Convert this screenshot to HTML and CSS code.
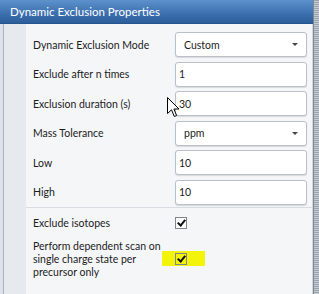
FILE: index.html
```html
<!DOCTYPE html>
<html lang="en">

<head>
    <meta charset="UTF-8">
    <title>Dynamic Exclusion Properties</title>
    <link rel="stylesheet" href="styles.css">
</head>

<body>
    <div class="panel">
        <div class="header">Dynamic Exclusion Properties</div>
        <div class="content">
            <div class="grid">
                <label class="label">Dynamic Exclusion Mode</label>
                <div class="control select"><span>Custom</span><span class="arrow"></span></div>

                <label class="label">Exclude after n times</label>
                <div class="control input">1</div>

                <label class="label">Exclusion duration (s)</label>
                <div class="control input">30</div>

                <label class="label">Mass Tolerance</label>
                <div class="control select"><span>ppm</span><span class="arrow"></span></div>

                <label class="label">Low</label>
                <div class="control input">10</div>

                <label class="label">High</label>
                <div class="control input">10</div>
            </div>

            <div class="divider"></div>

            <div class="checks">
                <div class="check-row">
                    <span class="label">Exclude isotopes</span>
                    <span class="cell"><span class="checkbox"></span></span>
                </div>
                <div class="check-row">
                    <span class="label wrap">Perform dependent scan on single charge state per precursor only</span>
                    <span class="cell"><span class="highlight"><span class="checkbox"></span></span></span>
                </div>
            </div>
        </div>
    </div>
    <div class="edge"></div>

    <svg class="cursor" width="13" height="21" viewBox="0 0 13 21">
        <path d="M0.5 0.5 L0.5 16.5 L4.5 12.8 L7.3 19.5 L9.6 18.5 L6.9 12 L12 12 Z" fill="#fff" stroke="#000" stroke-width="1" />
    </svg>
</body>

</html>
```

FILE: styles.css
```css
body {
    margin: 0;
    width: 319px;
    height: 294px;
    display: flex;
    font-family: Lato, "Open Sans", sans-serif;
    font-size: 10.5px;
    color: #1c1c1c;
    overflow: hidden;
    position: relative;
    background: #8e9aa6;
}

.panel {
    width: 313px;
    display: flex;
    flex-direction: column;
}

.header {
    height: 24px;
    box-sizing: border-box;
    padding: 5px 0 0 10px;
    color: #fff;
    font-size: 11.5px;
    background: linear-gradient(#5d92cd, #3c6fae 60%, #2c5e9c);
    border-bottom: 1px solid #27548c;
}

.content {
    flex: 1;
    padding: 8px 6px 0 33px;
    border-right: 1px solid #d3d8de;
    background: linear-gradient(to right, #dde3ea 0 3px, #a9b4c0 3px 4px, #e6e9ed 4px 26px, #f5f6f8 26px);
}

.grid {
    display: grid;
    grid-template-columns: 142px 132px;
    grid-auto-rows: 25px;
    row-gap: 4.5px;
    align-items: center;
}

.control {
    height: 25px;
    box-sizing: border-box;
    display: flex;
    align-items: center;
    background: #fff;
    border: 1px solid #b9c0c8;
    border-radius: 3px;
    box-shadow: 0 1px 1px rgba(0, 0, 0, 0.12);
}

.input {
    padding-left: 3px;
}

.select {
    padding: 0 8px;
    justify-content: space-between;
}

.arrow {
    width: 0;
    height: 0;
    border-left: 3px solid transparent;
    border-right: 3px solid transparent;
    border-top: 3px solid #444;
}

.divider {
    height: 1px;
    background: #d8dde3;
    margin: 2px -6px 0 -7px;
}

.checks {
    padding-top: 9px;
}

.check-row {
    display: grid;
    grid-template-columns: 142px 132px;
    align-items: center;
    margin-bottom: 11px;
}

.wrap {
    width: 132px;
    line-height: 13px;
}

.checkbox {
    display: block;
    width: 12px;
    height: 12px;
    box-sizing: border-box;
    border: 1px solid #7d8792;
    background: #fff;
    position: relative;
}

.checkbox::after {
    content: "";
    position: absolute;
    left: 3px;
    top: 0px;
    width: 3px;
    height: 6px;
    border: solid #111;
    border-width: 0 2px 2px 0;
    transform: rotate(40deg);
}

.highlight {
    display: inline-block;
    margin-left: -13px;
    padding: 2px 18px 1px 13px;
    background: #f4f40a;
}

.highlight .checkbox {
    background: transparent;
}

.edge {
    flex: 1;
    background: repeating-linear-gradient(#9aa4ae 0 1px, #c7ccd2 1px 2px);
    border-left: 1px solid #7c8794;
}

.cursor {
    position: absolute;
    left: 167px;
    top: 97px;
}
```
